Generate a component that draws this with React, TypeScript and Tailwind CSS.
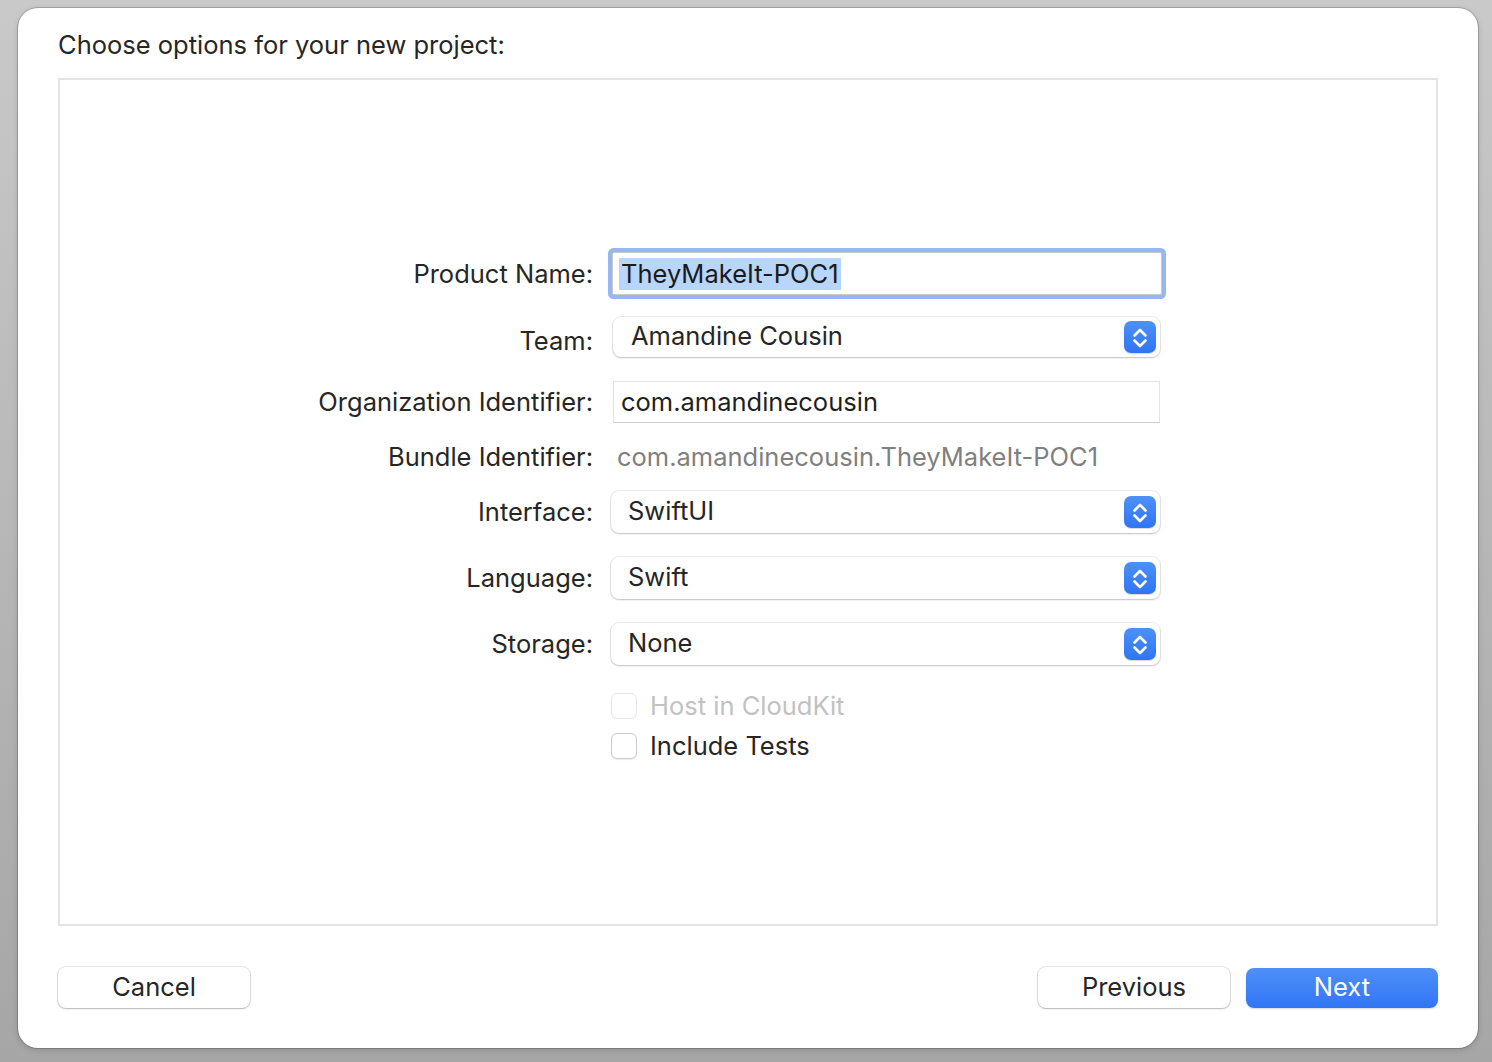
import React from "react";

const font = { fontFamily: "Inter, 'Liberation Sans', sans-serif" };

function Stepper() {
  return (
    <div className="flex h-[32px] w-[32px] items-center justify-center rounded-[7px] bg-gradient-to-b from-[#4e90f9] to-[#2f74f4] shadow-[0_1px_1px_rgba(0,0,0,0.15)]">
      <svg width="32" height="32" viewBox="0 0 32 32" fill="none">
        <path d="M10.5 14.5 L16 9 L21.5 14.5" stroke="white" strokeWidth="2.6" strokeLinecap="round" strokeLinejoin="round" />
        <path d="M10.5 19.5 L16 25 L21.5 19.5" stroke="white" strokeWidth="2.6" strokeLinecap="round" strokeLinejoin="round" />
      </svg>
    </div>
  );
}

function Popup({ text, w, h, pl, ml }: { text: string; w: string; h: string; pl: string; ml: string }) {
  return (
    <div className={`flex items-center justify-between rounded-[8px] bg-white pr-[4px] shadow-[0_0_0_1px_rgba(0,0,0,0.08),0_1px_2px_rgba(0,0,0,0.18)] ${w} ${h} ${pl} ${ml}`}>
      <span className="-mt-[1px] text-[25.5px] text-[#262626]">{text}</span>
      <Stepper />
    </div>
  );
}

function Label({ children, offset }: { children: React.ReactNode; offset?: string }) {
  return (
    <div className={`w-[533px] text-right text-[25.5px] text-[#262626] ${offset ?? ""}`}>{children}</div>
  );
}

export default function App() {
  return (
    <div style={font} className="h-[1062px] w-[1492px] overflow-hidden bg-gradient-to-b from-[#c9c9c9] to-[#a6a6a6] pt-[8px] pl-[18px]">
      <div className="flex h-[1040px] w-[1460px] flex-col rounded-[20px] bg-white shadow-[0_0_0_1px_rgba(0,0,0,0.18),0_2px_6px_rgba(0,0,0,0.15)]">
        <div className="pl-[40px] pt-[21px] text-[25.5px] leading-[32px] text-[#262626]">
          Choose options for your new project:
        </div>
        <div className="ml-[40px] mt-[17px] h-[848px] w-[1380px] border-2 border-[#e4e4e4] pt-[168px]">
          {/* Product name */}
          <div className="flex h-[51px] items-center gap-[18px]">
            <Label offset="mt-[2px]">Product Name:</Label>
            <div className="ml-[1px] flex h-[43px] w-[550px] items-center rounded-[2px] border border-[#c9c9c9] bg-white pl-[6px] shadow-[0_0_0_4px_#97b6f4]">
              <span className="bg-[#b8d5fc] px-[2px] text-[25.5px] leading-[32px] text-[#1a1a1a]">TheyMakeIt-POC1</span>
            </div>
          </div>
          {/* Team */}
          <div className="mt-[18px] flex h-[40px] items-center gap-[18px]">
            <Label offset="mt-[8px]">Team:</Label>
            <Popup text="Amandine Cousin" w="w-[547px]" h="h-[40px]" pl="pl-[18px]" ml="ml-[2px]" />
          </div>
          {/* Org */}
          <div className="mt-[24px] flex h-[42px] items-center gap-[18px]">
            <Label>Organization Identifier:</Label>
            <div className="ml-[2px] flex h-[42px] w-[547px] items-center border border-[#e3e3e3] border-b-[#cfcfcf] bg-white pl-[7px] text-[25.5px] text-[#1f1f1f]">
              com.amandinecousin
            </div>
          </div>
          {/* Bundle */}
          <div className="mt-[18px] flex h-[32px] items-center gap-[18px]">
            <Label>Bundle Identifier:</Label>
            <div className="pl-[6px] text-[25.5px] text-[#808080]">com.amandinecousin.TheyMakeIt-POC1</div>
          </div>
          {/* Interface */}
          <div className="mt-[18px] flex h-[42px] items-center gap-[18px]">
            <Label>Interface:</Label>
            <Popup text="SwiftUI" w="w-[549px]" h="h-[42px]" pl="pl-[17px]" ml="ml-0" />
          </div>
          <div className="mt-[24px] flex h-[42px] items-center gap-[18px]">
            <Label>Language:</Label>
            <Popup text="Swift" w="w-[549px]" h="h-[42px]" pl="pl-[17px]" ml="ml-0" />
          </div>
          <div className="mt-[24px] flex h-[42px] items-center gap-[18px]">
            <Label>Storage:</Label>
            <Popup text="None" w="w-[549px]" h="h-[42px]" pl="pl-[17px]" ml="ml-0" />
          </div>
          {/* Checkboxes */}
          <div className="mt-[28px] flex h-[26px] items-center gap-[18px]">
            <div className="w-[533px]" />
            <div className="flex items-center gap-[13px]">
              <div className="h-[26px] w-[26px] rounded-[6px] border border-[#e6e6e6] bg-white" />
              <span className="text-[25.5px] text-[#c2c2c2]">Host in CloudKit</span>
            </div>
          </div>
          <div className="mt-[14px] flex h-[26px] items-center gap-[18px]">
            <div className="w-[533px]" />
            <div className="flex items-center gap-[13px]">
              <div className="h-[26px] w-[26px] rounded-[6px] border border-[#cccccc] bg-white shadow-[0_1px_1px_rgba(0,0,0,0.08)]" />
              <span className="text-[25.5px] text-[#262626]">Include Tests</span>
            </div>
          </div>
        </div>
        {/* Buttons */}
        <div className="ml-[40px] mt-[41px] flex w-[1380px] items-start">
          <button className="flex h-[41px] w-[192px] items-center justify-center rounded-[8px] bg-white text-[25.5px] text-[#262626] shadow-[0_0_0_1px_rgba(0,0,0,0.1),0_1px_2px_rgba(0,0,0,0.2)]">
            Cancel
          </button>
          <div className="flex-1" />
          <button className="flex h-[41px] w-[192px] items-center justify-center rounded-[8px] bg-white text-[25.5px] text-[#262626] shadow-[0_0_0_1px_rgba(0,0,0,0.1),0_1px_2px_rgba(0,0,0,0.2)]">
            Previous
          </button>
          <button className="ml-[16px] mt-[1px] flex h-[40px] w-[192px] items-center justify-center rounded-[8px] bg-gradient-to-b from-[#4f8ff9] to-[#3175f5] pb-[1px] text-[25.5px] text-white shadow-[0_1px_2px_rgba(0,0,0,0.15)]">
            Next
          </button>
        </div>
      </div>
    </div>
  );
}
